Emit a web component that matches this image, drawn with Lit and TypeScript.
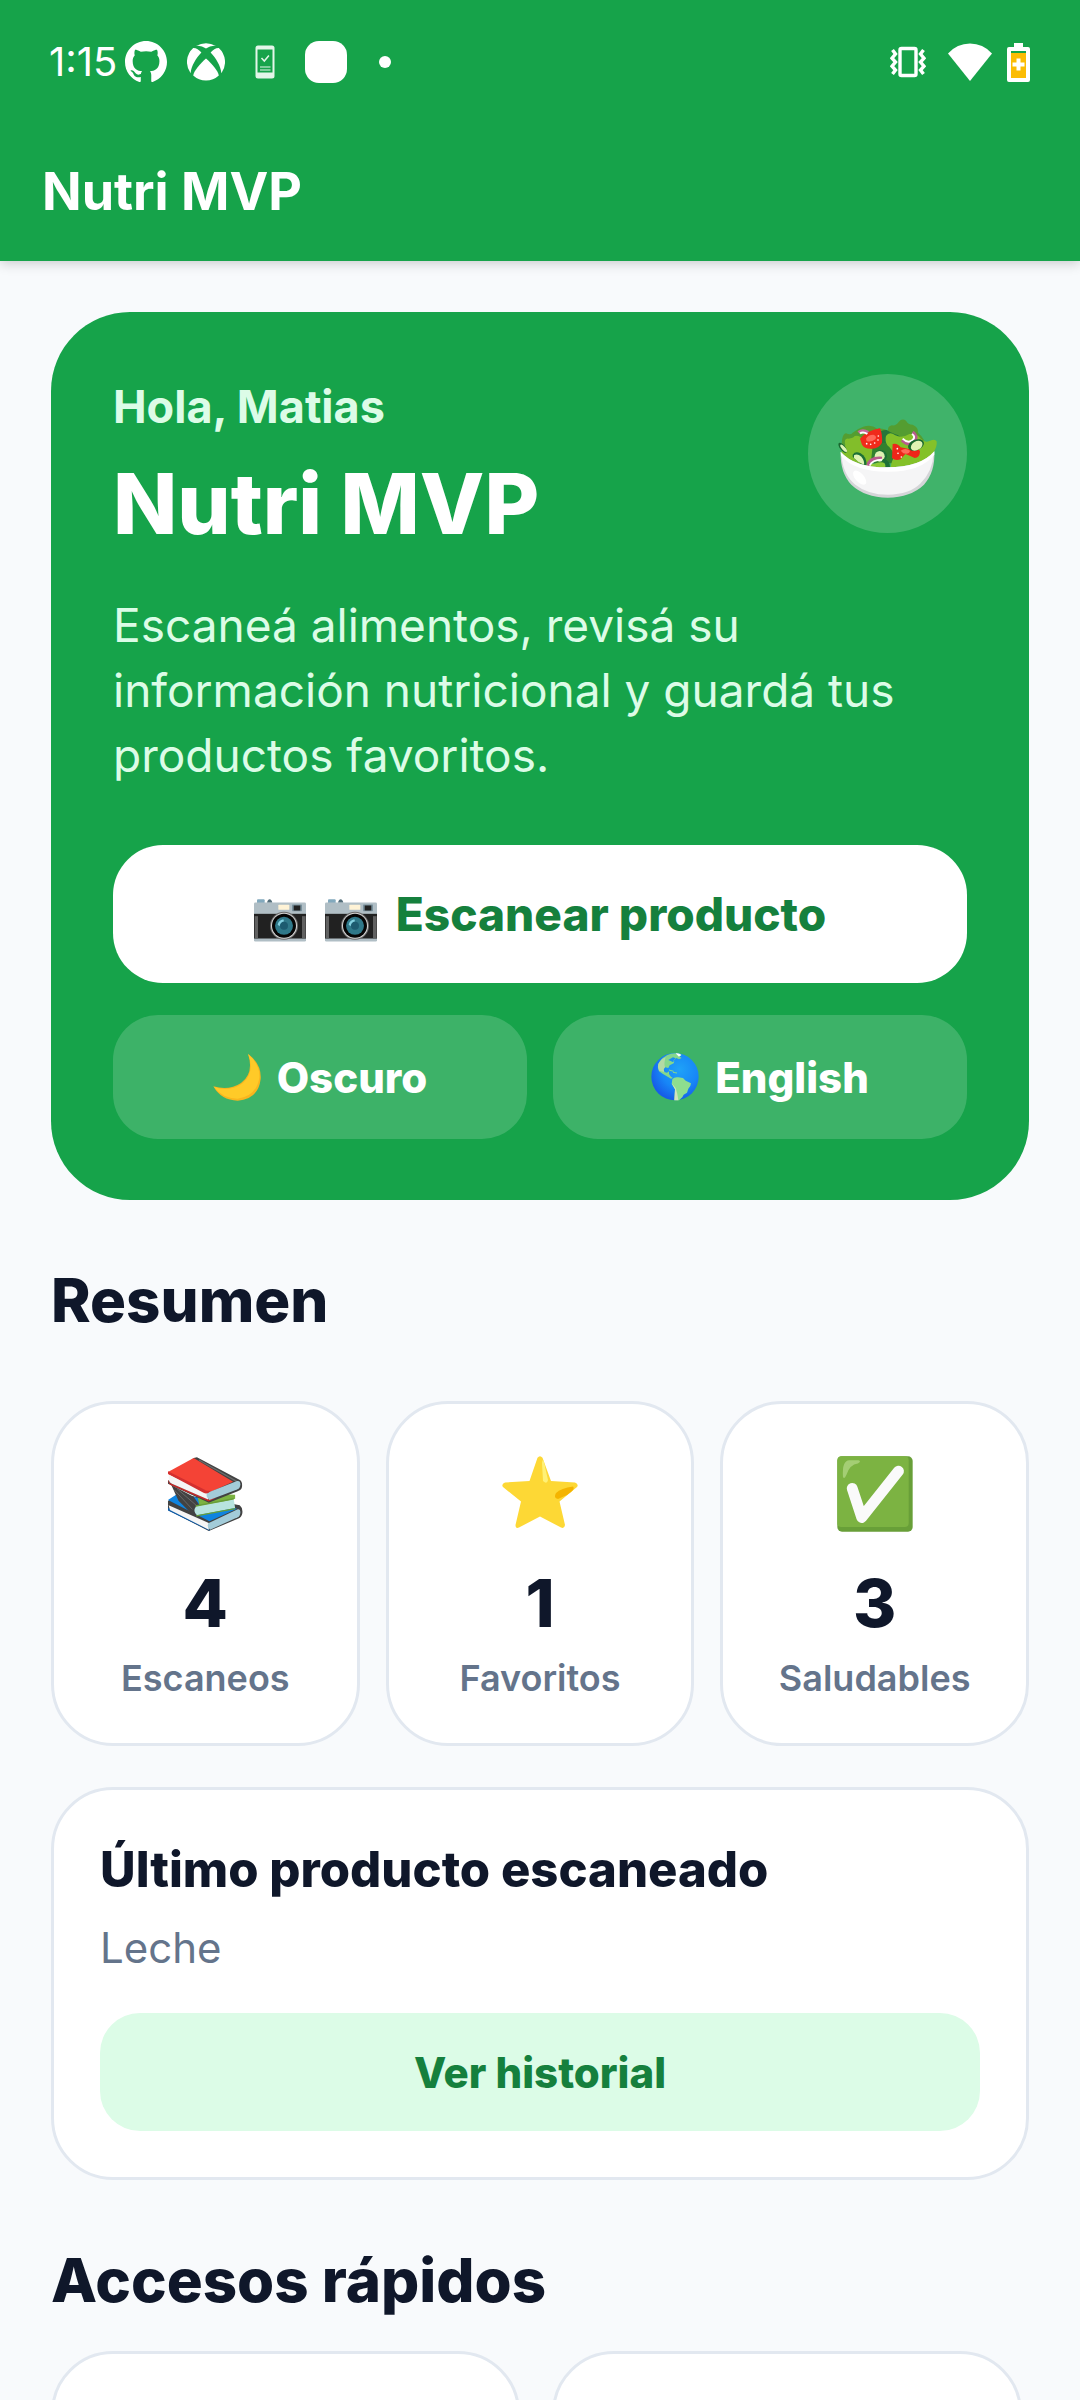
import { LitElement, html, css } from "lit";
import { customElement, state } from "lit/decorators.js";

const github = html`<svg class="i42" viewBox="0 0 16 16" fill="#fff" role="img" aria-label="GitHub">
  <path d="M8 0C3.58 0 0 3.58 0 8c0 3.54 2.29 6.53 5.47 7.59.4.07.55-.17.55-.38 0-.19-.01-.82-.01-1.49-2.01.37-2.53-.49-2.69-.94-.09-.23-.48-.94-.82-1.13-.28-.15-.68-.52-.01-.53.63-.01 1.08.58 1.23.82.72 1.21 1.87.87 2.33.66.07-.52.28-.87.51-1.07-1.78-.2-3.64-.89-3.64-3.95 0-.87.31-1.59.82-2.15-.08-.2-.36-1.02.08-2.12 0 0 .67-.21 2.2.82a7.6 7.6 0 0 1 4 0c1.53-1.04 2.2-.82 2.2-.82.44 1.1.16 1.92.08 2.12.51.56.82 1.27.82 2.15 0 3.07-1.87 3.75-3.65 3.95.29.25.54.73.54 1.48 0 1.07-.01 1.93-.01 2.2 0 .21.15.46.55.38A8.01 8.01 0 0 0 16 8c0-4.42-3.58-8-8-8z"/>
</svg>`;

const xbox = html`<svg class="i38" viewBox="0 0 38 38" fill="#fff" role="img" aria-label="Xbox">
  <path d="M9 3Q19-2.400 29 3Q24 2.200 19 5.400Q14 2.200 9 3Z"/>
  <path d="M6.200 5C9 4.800 12 7 14.400 9.600C9 15 4.400 23 3.600 30.200A19 19 0 0 1 6.200 5Z"/>
  <path d="M31.800 5C29 4.800 26 7 23.600 9.600C29 15 33.600 23 34.400 30.200A19 19 0 0 0 31.800 5Z"/>
  <path d="M19 15.600C25 21 31 28 31.800 32.500A18.800 18.800 0 0 1 6.200 32.500C7 28 13 21 19 15.600Z"/>
</svg>`;

const phoneCheck = html`<svg class="phone" viewBox="0 0 20 34" role="img" aria-label="Teléfono">
  <rect x=".5" y=".5" width="19" height="33" rx="2.500" fill="#e3f6e9"/>
  <rect x="2.500" y="4.500" width="15" height="23" fill="#16a34a"/>
  <path d="M6.500 13l2.800 3 4.600-5.500" fill="none" stroke="#e3f6e9" stroke-width="1.500"/>
  <path d="M5 22h10.500M5 25h10.500" stroke="#e3f6e9" stroke-width="1.200"/>
</svg>`;

const vibrate = html`<svg class="vibrate" viewBox="0 0 36 32" fill="none" stroke="#fff" role="img" aria-label="Vibración">
  <rect x="10" y="2.500" width="16" height="27" rx="1.500" stroke-width="3.400"/>
  <path d="M2.500 4l3 4-3.500 4.200L5.500 16 2 20.200 5.500 24l-3 4" stroke-width="3.400"/>
  <path d="M33.500 4l-3 4 3.500 4.200L30.500 16l3.500 4.200L30.500 24l3 4" stroke-width="3.400"/>
</svg>`;

const wifi = html`<svg class="wifi" viewBox="0 0 44 38" fill="#fff" role="img" aria-label="Wi-Fi">
  <path d="M0 10.500Q9 .5 22 .5T44 10.500L22 38Z"/>
</svg>`;

const battery = html`<svg class="battery" viewBox="0 0 23 39" role="img" aria-label="Batería">
  <path d="M7 0h9v4h5a2 2 0 0 1 2 2v31a2 2 0 0 1-2 2H2a2 2 0 0 1-2-2V6a2 2 0 0 1 2-2h5z" fill="#fff"/>
  <rect x="4" y="8" width="15" height="2" fill="#16a34a"/>
  <rect x="4" y="10" width="15" height="25" fill="#fbbc04"/>
  <path d="M9.500 15.500h4v4h4v4h-4v4h-4v-4h-4v-4h4z" fill="#fff"/>
</svg>`;

const salad = html`<svg class="salad" viewBox="172 160 300 300" role="img" aria-label="Ensalada">
  <path d="M184 300Q180 252 196 248Q210 254 216 246Q230 234 248 228Q272 220 290 234Q312 232 322 242Q320 226 334 224Q346 226 354 214Q364 202 376 210Q382 222 396 222Q414 230 412 246Q422 254 430 268L440 320L220 340Z" fill="#549d31"/>
  <path d="M290 258Q296 236 318 238Q330 246 342 250Q362 254 362 270L330 320L280 312Z" fill="#25763a"/>
  <path d="M182 306Q186 290 194 284Q188 262 204 264Q218 262 222 256Q238 252 244 266Q252 284 280 298L270 346Q210 338 182 306Z" fill="#82be2a"/>
  <path d="M276 288Q300 272 334 278L340 338H270Z" fill="#31812f"/>
  <path d="M316 256Q326 240 344 254Q364 264 386 250Q410 248 418 262Q432 276 444 272Q462 262 468 272Q470 288 458 306Q430 344 330 350Q332 330 342 318Q334 294 320 284Q312 270 316 256Z" fill="#84c129"/>
  <path d="M242 346Q256 334 280 340Q308 326 324 350Q280 354 242 346Z" fill="#8cca37"/>
  <path d="M238 264Q258 240 298 233Q306 252 304 276Q296 292 274 294Q252 296 244 282Z" fill="#f02a1b"/>
  <path d="M256 264Q262 252 278 252Q290 256 284 266Q270 276 258 271Z" fill="#ff6959"/>
  <g fill="#fff"><circle cx="258" cy="279" r="2.500"/><circle cx="270" cy="281" r="2.500"/><circle cx="282" cy="277" r="2.500"/><circle cx="292" cy="268" r="2.500"/><circle cx="293" cy="256" r="2.500"/></g>
  <path d="M234 246Q246 236 262 246" fill="none" stroke="#c46a9b" stroke-width="11"/>
  <path d="M238 248Q248 242 260 250" fill="none" stroke="#fff" stroke-width="6"/>
  <ellipse cx="186" cy="291" rx="18" ry="8" transform="rotate(52 186 291)" fill="#19682f"/>
  <ellipse cx="189" cy="293" rx="14" ry="5" transform="rotate(48 189 293)" fill="#dff3b3"/>
  <path d="M216 312Q224 300 240 308Q258 318 258 344Q236 340 216 318Z" fill="#1c7036"/>
  <path d="M220 314Q230 308 242 318Q252 330 250 342Q232 336 220 322Z" fill="#dff3b3"/>
  <ellipse cx="300" cy="316" rx="19" ry="18" fill="#1c7036"/>
  <ellipse cx="297" cy="317" rx="15" ry="16" fill="#dff3b3"/>
  <path d="M308 324Q330 330 328 350H314Q316 336 304 330Z" fill="#1c7036"/>
  <path d="M262 346Q266 320 304 323" fill="none" stroke="#b85b8d" stroke-width="10"/>
  <path d="M267 345Q274 328 304 327" fill="none" stroke="#fff" stroke-width="5"/>
  <path d="M336 280Q350 276 360 290L388 296Q410 288 418 302Q418 322 402 322Q390 316 374 310L360 326Q344 332 334 322Z" fill="#ef2619"/>
  <path d="M360 300Q374 290 388 300Q386 312 368 308Z" fill="#ff6b5c"/>
  <g fill="#fff"><circle cx="350" cy="294" r="2.500"/><circle cx="352" cy="308" r="2.500"/><circle cx="362" cy="319" r="2.500"/></g>
  <path d="M396 244Q412 256 402 272Q384 288 364 268" fill="none" stroke="#b85b8d" stroke-width="10"/>
  <path d="M394 250Q406 258 396 268Q382 280 366 264" fill="none" stroke="#fff" stroke-width="6"/>
  <ellipse cx="406" cy="283" rx="25" ry="16" transform="rotate(-22 406 283)" fill="#19682f"/>
  <ellipse cx="408" cy="285" rx="19" ry="13" transform="rotate(-32 408 285)" fill="#dff3b3"/>
  <path d="M180 303Q220 350 320 350T461 302Q464 364 430 402Q390 440 321 441Q252 440 212 402Q178 366 180 303Z" fill="#d5d5d8"/>
  <path d="M182 310Q222 356 320 356T459 308Q456 362 420 398Q386 432 322 432Q262 432 224 402Q186 372 182 310Z" fill="#f5f5f6"/>
  <path d="M180 303Q220 350 320 350T461 302V312Q420 364 320 363T181 315Z" fill="#fff"/>
  <ellipse cx="237" cy="381" rx="26" ry="13" transform="rotate(48 237 381)" fill="#fff"/>
</svg>`;

const camera = html`<svg class="camera" viewBox="162 86 156 164" role="img" aria-label="Cámara">
  <rect x="171" y="122" width="23" height="14" rx="3" fill="#82a9bd"/>
  <path d="M201 133q2-11 8-11t8 11z" fill="#546e7a"/>
  <rect x="162" y="132" width="156" height="117" rx="4" fill="#b0bec5"/>
  <rect x="162" y="166" width="156" height="74" fill="#212121"/>
  <rect x="164" y="173" width="10" height="66" fill="#616161"/>
  <rect x="306" y="173" width="11" height="66" fill="#616161"/>
  <rect x="235" y="139" width="33" height="15" rx="2" fill="#fff3d6"/>
  <rect x="276" y="138" width="30" height="20" rx="2" fill="#78909c"/>
  <rect x="281" y="141" width="20" height="15" fill="#212121"/>
  <circle cx="252" cy="202" r="42" fill="#6b6b6b"/>
  <circle cx="252" cy="202" r="39" fill="#d8d8d8"/>
  <circle cx="252" cy="202" r="36" fill="#050505"/>
  <circle cx="252" cy="202" r="27" fill="#2f7889"/>
  <circle cx="252" cy="202" r="12" fill="#1d5b70"/>
  <path d="M233 199q2-14 17-17l2 6q-12 3-13 15z" fill="#82cfe0"/>
</svg>`;

const moon = html`<svg class="i48" viewBox="44 586 144 144" aria-hidden="true">
  <path d="M149 588Q190 620 187 664Q180 724 118 729Q68 728 45 686Q92 700 128 676Q168 646 149 588Z" fill="#f9b51e"/>
  <path d="M150 590Q186 622 183 660Q174 716 118 723Q72 722 47 688Q96 704 134 676Q170 644 150 590Z" fill="#ffca28"/>
</svg>`;

const globe = html`<svg class="i48" viewBox="152 107 144 144" aria-hidden="true">
  <defs><radialGradient id="sea" cx=".6" cy=".35" r=".65"><stop offset="0" stop-color="#1fa2f7"/><stop offset=".6" stop-color="#1786f7"/><stop offset="1" stop-color="#165de8"/></radialGradient></defs>
  <circle cx="224" cy="178" r="71" fill="url(#sea)"/>
  <path d="M224 108Q238 108 244 113L236 117L244 122L236 126L228 122L220 130L214 128L216 134L222 132L220 138L208 144L204 152L194 150L190 156L192 164L200 166L206 162L206 170L212 178L218 182L212 184L202 178L188 170L176 162Q170 150 174 140Q186 116 212 109Z" fill="#85d78c"/>
  <path d="M174 140Q182 124 196 120Q190 138 194 150L190 156L192 164L176 160Q170 150 174 140Z" fill="#b4d9a4"/>
  <path d="M204 128l14-8 8 3-10 10z" fill="#1b8ff0"/>
  <path d="M226 108Q238 107 243 113L236 118L230 112Z" fill="#fff"/>
  <path d="M206 158l14 4M218 165l12 2" stroke="#85d78c" stroke-width="3" fill="none"/>
  <path d="M216 186Q222 178 234 180L248 182L256 190L272 198Q272 206 264 214L260 226L250 232L246 240L236 249H222L224 216L214 200Z" fill="#8ede8f"/>
  <path d="M214 198L226 212Q232 230 234 249H222L224 216Z" fill="#d3e3bc"/>
</svg>`;

const books = html`<svg class="i76" viewBox="49 46 231 231" aria-hidden="true">
  <path d="M52 183L84 160L270 196Q280 204 278 220Q276 232 266 236L176 274L52 210Z" fill="#424242"/>
  <path d="M52 180L86 158L262 206L178 244Z" fill="#0f84e0"/>
  <path d="M52 203L176 268L180 274L52 212Z" fill="#0b5aa8"/>
  <path d="M54 196L176 250V270L58 210Z" fill="#f5f5f5"/>
  <path d="M176 250L264 208Q272 206 272 216Q272 228 264 232L180 270Q168 260 176 250Z" fill="#a3ccd9"/>
  <path d="M140 160L256 164L256 176L150 208Z" fill="#7cb342"/>
  <path d="M62 134L130 170L148 196L138 228Q128 230 120 218L84 182Z" fill="#424242"/>
  <path d="M80 146L138 196M72 150L126 208" stroke="#686868" stroke-width="3"/>
  <path d="M138 198L252 178L256 204L140 226Q126 214 138 198Z" fill="#b8e4df"/>
  <path d="M136 198L252 176M138 228L256 206" stroke="#689f38" stroke-width="4"/>
  <path d="M140 50L272 120Q280 128 276 144Q272 152 262 154L176 188L52 130V122L130 52Z" fill="#424242"/>
  <path d="M146 58L262 124" stroke="#6b6b6b" stroke-width="4"/>
  <path d="M52 95L130 52L250 124L176 158Q168 160 156 154L54 102Z" fill="#f44336"/>
  <path d="M52 118Q54 134 64 136L176 184L200 172L176 178L58 128Z" fill="#c62828"/>
  <path d="M54 102V116Q56 128 64 130L174 178L176 156Z" fill="#f5f5f5"/>
  <path d="M172 158L262 122Q272 120 272 132Q272 144 262 148L178 180Q164 168 172 158Z" fill="#a3ccd9"/>
  <path d="M52 92V100L160 158Q168 162 176 158L182 152L170 152Z" fill="#d32f2f"/>
</svg>`;

const star = html`<svg class="i76" viewBox="0 0 76 76" aria-hidden="true">
  <path d="M35.500 1.800Q38-1.200 40.500 1.800L49 25L73 26.500Q77 28 75 31L57.500 45.500L63 69Q62.500 73 59 71.500L38 60.500L17 71.500Q13.500 73 13.500 69L19 45.500L1 31Q-1 28 3 26.500L27.500 25Z" fill="#fdd835"/>
  <path d="M40 7Q41-1 43.500 13L46 24Q45 29 41 25Z" fill="#fff176"/>
  <path d="M71 30.500Q74 33 65 39L56 43Q51 42 54 37Q59 32 71 30.500Z" fill="#f4b400"/>
</svg>`;

const check = html`<svg class="i76" viewBox="467 224 230 230" aria-hidden="true">
  <rect x="468" y="225" width="228" height="228" rx="14" fill="#689f38"/>
  <rect x="468" y="225" width="216" height="214" rx="12" fill="#7cb342"/>
  <path d="M513 322L542 410L653 270" fill="none" stroke="#fafafa" stroke-width="33" stroke-linecap="round" stroke-linejoin="round"/>
  <path d="M485 286Q482 238 504 237H532Q542 240 530 247Q506 250 496 280Q488 298 485 286Z" fill="#aed581" opacity=".8"/>
</svg>`;

@customElement("app-root")
export class AppRoot extends LitElement {
  static styles = css`
    :host {
      display: flex;
      flex-direction: column;
      height: 100vh;
      overflow: hidden;
      background: #f8fafc;
      color: #0f172a;
      font-family: Inter, "Open Sans", sans-serif;
    }
    * { box-sizing: border-box; }
    h1, h2, h3, p { margin: 0; }
    button { border: 0; padding: 0; font: inherit; cursor: pointer; }
    svg { display: block; flex: none; }

    .top {
      flex: none;
      background: #16a34a;
      color: #fff;
      box-shadow: 0 2px 12px rgba(0, 0, 0, 0.2);
      z-index: 1;
    }
    .status {
      display: flex;
      justify-content: space-between;
      align-items: center;
      height: 124px;
      padding: 0 50px 0 49px;
    }
    .left, .right { display: flex; align-items: center; }
    .left { gap: 20px; }
    .time { font-size: 40px; line-height: 48px; margin-right: -12px; }
    .i42 { width: 42px; height: 42px; }
    .i38 { width: 38px; height: 38px; }
    .i48 { width: 48px; height: 48px; }
    .i76 { width: 76px; height: 76px; }
    .phone { width: 20px; height: 34px; margin: 0 10px; }
    .square { width: 42px; height: 42px; border-radius: 14px; background: #fff; }
    .dot { width: 12px; height: 12px; border-radius: 50%; background: #fff; margin-left: 12px; }
    .vibrate { width: 36px; height: 32px; margin-right: 22px; }
    .wifi { width: 44px; height: 38px; margin-right: 15px; }
    .battery { width: 23px; height: 39px; }
    .bar {
      display: flex;
      align-items: center;
      height: 137px;
      padding: 0 42px 2px;
    }
    .bar h1 { font-size: 52px; line-height: 60px; font-weight: 700; }

    main {
      flex: 1;
      min-height: 0;
      overflow-y: auto;
      scrollbar-width: none;
      padding: 51px;
    }
    .hero { background: #16a34a; border-radius: 79px; padding: 62px 62px 61px; }
    .intro { display: flex; justify-content: space-between; align-items: flex-start; }
    .hello { color: #dcfce7; font-size: 45px; line-height: 66px; font-weight: 700; }
    .brand { color: #fff; font-size: 84px; line-height: 106px; font-weight: 800; margin-top: 11px; }
    .bubble {
      display: flex;
      align-items: center;
      justify-content: center;
      flex: none;
      width: 159px;
      height: 159px;
      border-radius: 50%;
      background: rgba(255, 255, 255, 0.18);
    }
    .salad { width: 100px; height: 100px; }
    .desc { color: #dcfce7; font-size: 46px; line-height: 65px; margin-top: 36px; }
    .btn { display: flex; align-items: center; justify-content: center; width: 100%; font-weight: 800; }
    .scan {
      gap: 19px;
      height: 138px;
      margin-top: 57px;
      border-radius: 50px;
      background: #fff;
      color: #15803d;
      font-size: 46px;
    }
    .camera { width: 52px; height: 55px; }
    .pair { display: grid; grid-template-columns: 1fr 1fr; gap: 26px; margin-top: 32px; }
    .soft {
      gap: 16px;
      height: 124px;
      border-radius: 45px;
      background: rgba(255, 255, 255, 0.17);
      color: #fff;
      font-size: 42px;
    }

    .section { font-size: 60px; line-height: 60px; font-weight: 800; margin: 70px 0 41px; }
    .card { background: #fff; border: 3px solid #e2e8f0; border-radius: 62px; }
    .stats { display: grid; grid-template-columns: repeat(3, 1fr); gap: 26px; margin-top: 71px; }
    .stat { display: flex; flex-direction: column; align-items: center; padding: 52px 10px 42px; }
    .num { font-size: 66px; line-height: 76px; font-weight: 800; margin-top: 33px; }
    .label { font-size: 36px; line-height: 46px; font-weight: 600; color: #64748b; margin-top: 14px; }
    .last { margin-top: 41px; padding: 47px 46px 46px; }
    .last-title { font-size: 49px; line-height: 66px; font-weight: 800; }
    .product { font-size: 42px; line-height: 56px; color: #64748b; margin-top: 17px; }
    .history {
      height: 118px;
      margin-top: 37px;
      border-radius: 40px;
      background: #dcfce7;
      color: #15803d;
      font-size: 42px;
    }
    .quick { display: flex; flex-wrap: wrap; gap: 32px; }
    .tile { width: 48%; min-height: 300px; }
  `;

  @state() private stats = [
    { icon: books, value: 4, label: "Escaneos" },
    { icon: star, value: 1, label: "Favoritos" },
    { icon: check, value: 3, label: "Saludables" },
  ];

  render() {
    return html`
      <header class="top">
        <div class="status">
          <div class="left">
            <span class="time">1:15</span>
            ${github}${xbox}${phoneCheck}
            <span class="square"></span><span class="dot"></span>
          </div>
          <div class="right">${vibrate}${wifi}${battery}</div>
        </div>
        <div class="bar"><h1>Nutri MVP</h1></div>
      </header>
      <main>
        <section class="hero">
          <div class="intro">
            <div>
              <p class="hello">Hola, Matias</p>
              <h2 class="brand">Nutri MVP</h2>
            </div>
            <div class="bubble">${salad}</div>
          </div>
          <p class="desc">Escaneá alimentos, revisá su información nutricional y guardá tus productos favoritos.</p>
          <button class="btn scan" type="button">${camera}${camera}<span>Escanear producto</span></button>
          <div class="pair">
            <button class="btn soft" type="button">${moon}<span>Oscuro</span></button>
            <button class="btn soft" type="button">${globe}<span>English</span></button>
          </div>
        </section>
        <h2 class="section">Resumen</h2>
        <section class="stats">
          ${this.stats.map(
            (s) => html`<div class="card stat">
              ${s.icon}
              <span class="num">${s.value}</span>
              <span class="label">${s.label}</span>
            </div>`
          )}
        </section>
        <section class="card last">
          <h3 class="last-title">Último producto escaneado</h3>
          <p class="product">Leche</p>
          <button class="btn history" type="button">Ver historial</button>
        </section>
        <h2 class="section">Accesos rápidos</h2>
        <section class="quick">
          <div class="card tile"></div>
          <div class="card tile"></div>
        </section>
      </main>
    `;
  }
}
